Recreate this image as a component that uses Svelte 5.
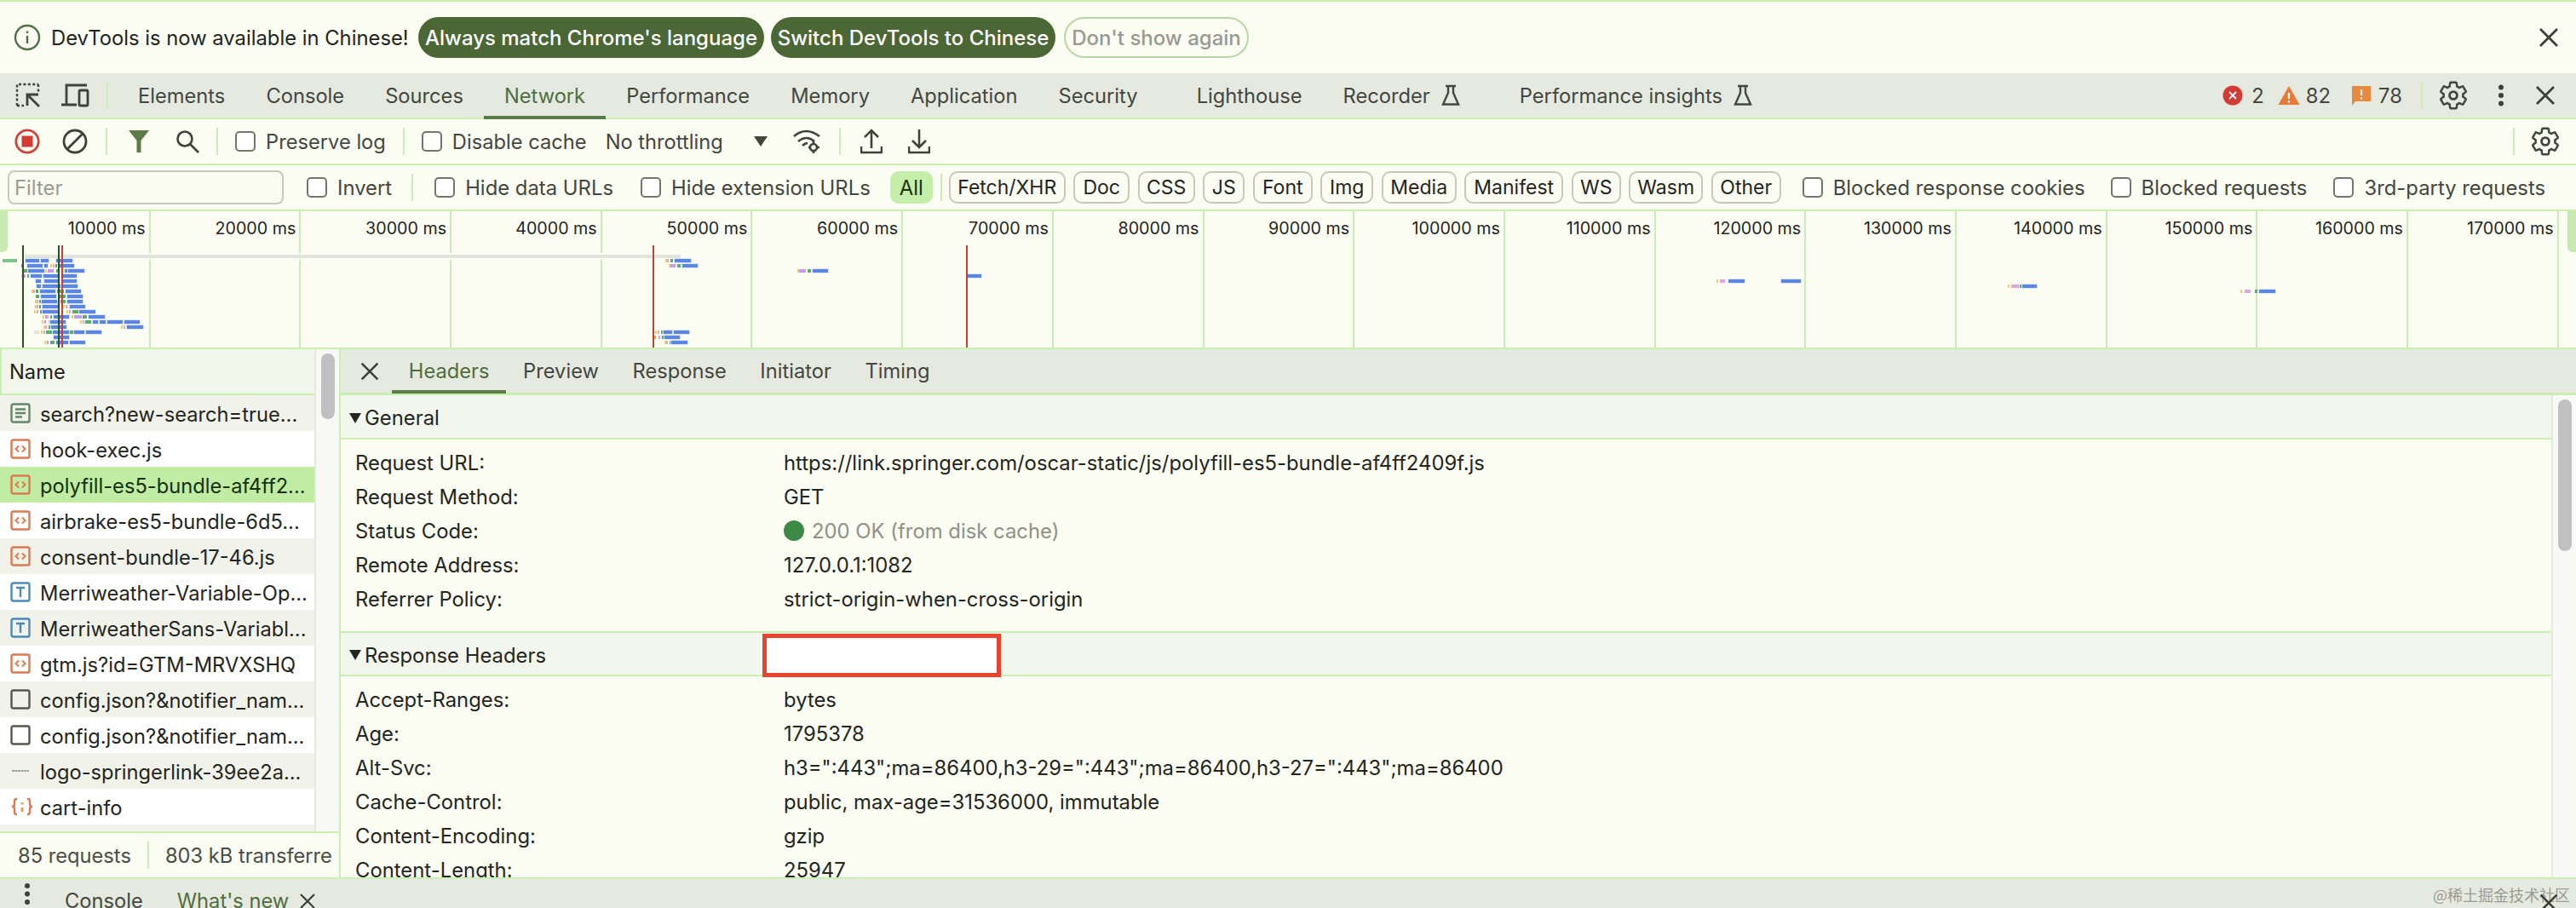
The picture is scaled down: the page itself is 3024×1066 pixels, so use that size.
<script>
  const tabs = [
    { t: 'Elements' }, { t: 'Console' }, { t: 'Sources' }, { t: 'Network', on: true }, { t: 'Performance' },
    { t: 'Memory' }, { t: 'Application' }, { t: 'Security', wide: true }, { t: 'Lighthouse' },
    { t: 'Recorder', flask: true, wide: true }, { t: 'Performance insights', flask: true }
  ];
  const pills = [['Fetch/XHR', 137], ['Doc', 66], ['CSS', 67], ['JS', 49], ['Font', 70], ['Img', 62], ['Media', 88], ['Manifest', 116], ['WS', 58], ['Wasm', 87], ['Other', 82]];
  const ticks = Array.from({ length: 17 }, (_, i) => `${(i + 1) * 10000} ms`);
  const files = [
    ['doc', 'search?new-search=true...', 'alt'], ['js', 'hook-exec.js', ''], ['js', 'polyfill-es5-bundle-af4ff2...', 'sel'],
    ['js', 'airbrake-es5-bundle-6d5...', ''], ['js', 'consent-bundle-17-46.js', 'alt'], ['font', 'Merriweather-Variable-Op...', ''],
    ['font', 'MerriweatherSans-Variabl...', 'alt'], ['js', 'gtm.js?id=GTM-MRVXSHQ', ''], ['box', 'config.json?&notifier_nam...', 'alt'],
    ['box', 'config.json?&notifier_nam...', ''], ['logo', 'logo-springerlink-39ee2a...', 'alt'], ['json', 'cart-info', ''], ['', '', 'alt']
  ];
  const general = [
    ['Request URL:', 'https://link.springer.com/oscar-static/js/polyfill-es5-bundle-af4ff2409f.js'],
    ['Request Method:', 'GET'], ['Status Code:', '200 OK (from disk cache)', true], ['Remote Address:', '127.0.0.1:1082'],
    ['Referrer Policy:', 'strict-origin-when-cross-origin']
  ];
  const response = [
    ['Accept-Ranges:', 'bytes'], ['Age:', '1795378'], ['Alt-Svc:', 'h3=":443";ma=86400,h3-29=":443";ma=86400,h3-27=":443";ma=86400'],
    ['Cache-Control:', 'public, max-age=31536000, immutable'], ['Content-Encoding:', 'gzip'], ['Content-Length:', '25947']
  ];

  const C = { b: '#5d86e0', g: '#5cac6c', p: '#c79af0', y: '#efd067', k: '#e3a4e4', o: '#e9a54a', a: '#e2e4db' };
  const spec = [
    [1, 'b90-138 b143-172 b198-254'], [2, 'g75-85 b95-150 b155-168 y178-181 k187-190 g196-200 b208-260'],
    [3, 'g85-95 b100-155 y160-164 p168-190 g197-205 y218-221 b228-236 b240-296'],
    [4, 'y76-79 p82-90 g96-102 b107-148 b153-205 b215-270'], [5, 'b125-145 b155-207 b217-270'], [6, 'b130-145 b150-212 b220-274'],
    [7, 'y110-113 k118-121 g127-135 b140-195 g202-225 b232-286'], [8, 'g127-138 b143-198 g210-230 b236-290'],
    [9, 'y122-125 k130-133 g139-143 b147-202 g212-232 b238-292'], [10, 'y122-125 k130-133 g139-143 b149-204 y222-225 k230-233 b246-300'],
    [11, 'y120-123 k128-131 g140-146 b150-205 y235-238 k243-246 g255-275 b280-335'],
    [12, 'y150-153 p158-161 k166-169 g178-182 b188-243 y252-255 p260-287 g292-306 b312-368'],
    [13, 'y147-150 p157-160 k170-173 b178-232 y282-285 k290-293 g300-303 g306-320 b326-346 b350-373 b378-433 b437-492'],
    [14, 'y152-155 k160-163 g172-176 b180-235 y425-428 k435-438 b448-504'],
    [15, 'a120-137 y145-148 k153-156 g162-182 b186-242 g247-257 b262-298 b303-358'], [16, 'b189-244'],
    [17, 'y155-158 p165-168 g177-192 b197-241 b246-300']
  ];
  const spec2 = [
    [1, 'y122-125 k130-133 g140-151 b156-212'], [2, 'y135-138 p142-159 g165-177 b182-237'],
    [3, 'y587-590 p594-618 g624-636 b642-696'], [4, 'b1188-1236'],
    [5, 'y3825-3830 k3838-3855 b3867-3924 b4053-4122'], [6, 'y4851-4856 k4862-4890 g4892-4899 b4902-4953'], [7, 'y5670-5675 k5685-5705 g5720-5730 b5736-5793'],
    [15, 'y87-90 k95-98 g108-112 b118-147 b153-207'], [16, 'o85-88 k98-101 g110-114 b120-175'], [17, 'y120-123 k127-130 g138-142 b145-200']
  ];
  function parse(list, ox) {
    const out = [];
    for (const [row, s] of list) {
      for (const seg of s.split(' ')) {
        const [a, b] = seg.slice(1).split('-').map(Number);
        out.push({ x: ox + a / 3, w: (b - a) / 3, y: 56 + (row - 1) * 6, c: C[seg[0]], blue: seg[0] === 'b' });
      }
    }
    return out;
  }
  const bars = [...parse(spec, 0), ...parse(spec2, 740)];
  const gear = 'M19.14 12.94c.04-.3.06-.61.06-.94 0-.32-.02-.64-.07-.94l2.03-1.58c.18-.14.23-.41.12-.61l-1.92-3.32c-.12-.22-.37-.29-.59-.22l-2.39.96c-.5-.38-1.03-.7-1.62-.94l-.36-2.54c-.04-.24-.24-.41-.48-.41h-3.84c-.24 0-.43.17-.47.41l-.36 2.54c-.59.24-1.13.57-1.62.94l-2.39-.96c-.22-.08-.47 0-.59.22L2.74 8.87c-.12.21-.08.47.12.61l2.03 1.58c-.05.3-.09.63-.09.94s.02.64.07.94l-2.03 1.58c-.18.14-.23.41-.12.61l1.92 3.32c.12.22.37.29.59.22l2.39-.96c.5.38 1.03.7 1.62.94l.36 2.54c.05.24.24.41.48.41h3.84c.24 0 .44-.17.47-.41l.36-2.54c.59-.24 1.13-.56 1.62-.94l2.39.96c.22.08.47 0 .59-.22l1.92-3.32c.12-.22.07-.47-.12-.61l-2.01-1.58z';
</script>

{#snippet x(size)}
  <svg class="ic" width={size} height={size} viewBox="0 0 24 24"><path d="M4 4 20 20M20 4 4 20" stroke="#3c3f38" stroke-width="2.2" fill="none"/></svg>
{/snippet}
{#snippet cog()}
  <svg class="ic" width="38" height="38" viewBox="0 0 24 24" fill="none" stroke="#44473f" stroke-width="1.6"><path d={gear}/><circle cx="12" cy="12" r="2.8" stroke-width="1.8"/></svg>
{/snippet}
{#snippet flask()}
  <svg class="ic flask" width="24" height="26" viewBox="0 0 24 26" fill="none" stroke="#44473f" stroke-width="2.4"><path d="M6 2h12M9 2v8L3 23.5h18L15 10V2"/></svg>
{/snippet}
{#snippet checkbox()}<span class="cb"></span>{/snippet}
{#snippet fileIcon(k)}
  {#if k === 'doc'}
    <svg width="24" height="24" viewBox="0 0 24 24" fill="none" stroke="#62886b" stroke-width="2.4"><rect x="1.5" y="1.5" width="21" height="21" rx="2"/><path d="M6 7.5h12M6 12h12M6 16.5h8"/></svg>
  {:else if k === 'js'}
    <svg width="24" height="24" viewBox="0 0 24 24" fill="none" stroke="#dc7a52" stroke-width="2.4"><rect x="1.5" y="1.5" width="21" height="21" rx="2"/><path d="M10 8.5 6.5 12l3.5 3.5M14 8.5l3.5 3.5-3.5 3.5" stroke-width="2"/></svg>
  {:else if k === 'font'}
    <svg width="24" height="24" viewBox="0 0 24 24" fill="none" stroke="#4a8bb8" stroke-width="2.4"><rect x="1.5" y="1.5" width="21" height="21" rx="2"/><path d="M7 7h10M12 7v11"/></svg>
  {:else if k === 'box'}
    <svg width="24" height="24" viewBox="0 0 24 24" fill="none" stroke="#55574f" stroke-width="2.4"><rect x="1.5" y="1.5" width="21" height="21" rx="2"/></svg>
  {:else if k === 'logo'}
    <svg width="24" height="24" viewBox="0 0 24 24"><path d="M2 12h20" stroke="#7d8a80" stroke-width="1.6" stroke-dasharray="3 .6"/></svg>
  {:else if k === 'json'}
    <svg width="28" height="24" viewBox="0 0 28 24" fill="none" stroke="#dc7a52" stroke-width="2.4"><path d="M8 3H7Q5 3 5 6v3q0 3-3 3 3 0 3 3v3q0 3 2 3h1M20 3h1q2 0 2 3v3q0 3 3 3-3 0-3 3v3q0 3-2 3h-1"/><path d="M14 7v2.5M14 13v5" stroke="#e0a050" stroke-width="3"/></svg>
  {/if}
{/snippet}

<div class="app">
  <div class="infobar">
    <svg class="info" width="32" height="32" viewBox="0 0 32 32" fill="none" stroke="#51704a" stroke-width="2.4"><circle cx="16" cy="16" r="14"/><path d="M16 14v9M16 8.5v2.6"/></svg>
    <span class="msg">DevTools is now available in Chinese!</span>
    <button class="solid first">Always match Chrome's language</button>
    <button class="solid">Switch DevTools to Chinese</button>
    <button class="ghost">Don't show again</button>
    <span class="grow"></span>
    <span class="close-info">{@render x(30)}</span>
  </div>

  <div class="tabbar">
    <svg class="tb1" width="30" height="30" viewBox="0 0 30 30" fill="none" stroke="#3f423b" stroke-width="2.4"><path d="M2 27V2h25" stroke-dasharray="3 2.4"/><path d="M27 2v9M2 27h8" stroke-dasharray="3 2.4"/><path d="M14 27V14h13M14 14l14 14" stroke-width="2.8"/></svg>
    <svg class="tb2" width="34" height="30" viewBox="0 0 34 30" fill="none" stroke="#3f423b" stroke-width="2.8"><path d="M0 26h18M6 26V3h24"/><rect x="21" y="9" width="10" height="18" rx="1.5"/></svg>
    <span class="sep s-tab"></span>
    <div class="tabs">
      {#each tabs as tab}
        <span class="tab" class:on={tab.on} class:wide={tab.wide}>{tab.t}{#if tab.flask}{@render flask()}{/if}</span>
      {/each}
    </div>
    <span class="grow"></span>
    <svg width="24" height="24" viewBox="0 0 24 24"><circle cx="12" cy="12" r="11.5" fill="#d23a34"/><path d="M8 8l8 8M16 8l-8 8" stroke="#fff" stroke-width="1.8"/></svg>
    <span class="count c1">2</span>
    <svg class="warn" width="26" height="24" viewBox="0 0 26 24"><path d="M13 1 25.5 23H.5z" fill="#e57a3a"/><path d="M13 9v7M13 18v2.6" stroke="#fff" stroke-width="2.2"/></svg>
    <span class="count c2">82</span>
    <svg class="iss" width="24" height="24" viewBox="0 0 24 24"><path d="M1 1h22v18H5l-4 5z" fill="#e8893f"/><path d="M12 5v7M12 14v2.6" stroke="#fff" stroke-width="2.2"/></svg>
    <span class="count c3">78</span>
    <span class="sep s-count"></span>
    <span class="gear1">{@render cog()}</span>
    <svg class="dots" width="8" height="26" viewBox="0 0 8 26" fill="#3f423b"><circle cx="4" cy="3.5" r="3"/><circle cx="4" cy="13" r="3"/><circle cx="4" cy="22.5" r="3"/></svg>
    <span class="close-tab">{@render x(30)}</span>
  </div>

  <div class="netbar">
    <svg class="n1" width="30" height="30" viewBox="0 0 30 30"><circle cx="15" cy="15" r="13.2" fill="none" stroke="#c9443f" stroke-width="2.8"/><rect x="8.5" y="8.5" width="13" height="13" fill="#d23a34"/></svg>
    <svg class="n2" width="30" height="30" viewBox="0 0 30 30" fill="none" stroke="#3f423b" stroke-width="2.8"><circle cx="15" cy="15" r="13"/><path d="M6 24 24 6"/></svg>
    <span class="sep s-n1"></span>
    <svg class="n3" width="26" height="28" viewBox="0 0 26 28"><path d="M1 1h24l-9.5 12v14h-5V13z" fill="#5b7c47"/></svg>
    <svg class="n4" width="28" height="28" viewBox="0 0 28 28" fill="none" stroke="#3f423b" stroke-width="2.6"><circle cx="11" cy="11" r="8.5"/><path d="M17 17 27 27"/></svg>
    <span class="sep s-n2"></span>
    {@render checkbox()}<label class="lbl">Preserve log</label>
    <span class="sep s-n3"></span>
    {@render checkbox()}<label class="lbl">Disable cache</label>
    <span class="thr">No throttling</span>
    <span class="tri"></span>
    <svg class="wifi" width="34" height="30" viewBox="0 0 34 30" fill="none" stroke="#3f423b" stroke-width="2.6"><path d="M1 9Q15-3 31 9M6 15q10-8 19 0M11 20q3-3 6-3"/><circle cx="24" cy="22" r="4"/><path d="M24 15v3M24 26v3M18 22h2M28 22h3"/></svg>
    <span class="sep s-n4"></span>
    <svg class="up" width="26" height="30" viewBox="0 0 26 30" fill="none" stroke="#3f423b" stroke-width="2.6"><path d="M13 23V2M5 10l8-8 8 8M1 21v7h24v-7"/></svg>
    <svg class="down" width="26" height="30" viewBox="0 0 26 30" fill="none" stroke="#3f423b" stroke-width="2.6"><path d="M13 1v21M5 14l8 8 8-8M1 21v7h24v-7"/></svg>
    <span class="grow"></span>
    <span class="sep s-n5"></span>
    <span class="gear2">{@render cog()}</span>
  </div>

  <div class="filterbar">
    <div class="filter">Filter</div>
    <span class="f-cb1">{@render checkbox()}</span><label class="lbl">Invert</label>
    <span class="sep s-f1"></span>
    {@render checkbox()}<label class="lbl">Hide data URLs</label>
    <span class="f-cb2">{@render checkbox()}</span><label class="lbl">Hide extension URLs</label>
    <span class="all">All</span>
    <span class="sep s-f2"></span>
    <div class="pills">{#each pills as p}<span class="pill" style="width:{p[1]}px">{p[0]}</span>{/each}</div>
    <span class="f-cb3">{@render checkbox()}</span><label class="lbl">Blocked response cookies</label>
    <span class="f-cb4">{@render checkbox()}</span><label class="lbl">Blocked requests</label>
    <span class="f-cb5">{@render checkbox()}</span><label class="lbl">3rd-party requests</label>
  </div>

  <div class="overview">
    <div class="ticks">{#each ticks as t}<div class="tick">{t}</div>{/each}</div>
    <div class="handle left"></div>
    <div class="handle right"></div>
    <div class="band"></div>
    <div class="graybar"></div>
    <div class="greenbar"></div>
    {#each bars as b}
      <i class="bar" class:blue={b.blue} style="left:{b.x}px;top:{b.y}px;width:{b.w}px;background:{b.c}"></i>
    {/each}
    <i class="vl dark" style="left:26px"></i>
    <i class="vl dark" style="left:68px"></i>
    <i class="vl red" style="left:72px"></i>
    <i class="vl red" style="left:766px"></i>
    <i class="vl red" style="left:1134px"></i>
  </div>

  <div class="split">
    <div class="left-pane">
      <div class="list-wrap">
        <div class="list">
          <div class="name-head">Name</div>
          {#each files as f}
            <div class="row {f[2]}">
              <span class="ficon">{@render fileIcon(f[0])}</span><span class="fname">{f[1]}</span>
            </div>
          {/each}
        </div>
        <div class="track"><div class="thumb t1"></div></div>
      </div>
      <div class="status"><span>85 requests</span><span class="sep s-st"></span><span>803 kB transferre</span></div>
    </div>

    <div class="right-pane">
      <div class="detail-tabs">
        <span class="detail-x">{@render x(28)}</span>
        <span class="dtab on">Headers</span><span class="dtab">Preview</span><span class="dtab">Response</span><span class="dtab">Initiator</span><span class="dtab">Timing</span>
      </div>
      <div class="detail-body">
        <div class="content">
          <div class="section"><span class="caret"></span>General</div>
          <div class="kvs gen">
            {#each general as g}
              <div class="kv"><span class="k">{g[0]}</span>{#if g[2]}<span class="v muted"><i class="dot"></i>{g[1]}</span>{:else}<span class="v">{g[1]}</span>{/if}</div>
            {/each}
          </div>
          <div class="section resp"><span class="caret"></span>Response Headers<span class="redact"></span></div>
          <div class="kvs">
            {#each response as g}<div class="kv"><span class="k">{g[0]}</span><span class="v">{g[1]}</span></div>{/each}
          </div>
        </div>
        <div class="track"><div class="thumb t2"></div></div>
      </div>
    </div>
  </div>

  <div class="drawer">
    <svg class="d-dots" width="8" height="34" viewBox="0 0 8 34" fill="#3f423b"><circle cx="4" cy="8" r="3"/><circle cx="4" cy="17.5" r="3"/><circle cx="4" cy="27" r="3"/></svg>
    <span class="d-tab">Console</span>
    <span class="d-tab green">What's new</span>
    <span class="d-x">{@render x(24)}</span>
    <span class="grow"></span>
    <span class="mark">@稀土掘金技术社区</span>
    <span class="d-x2">{@render x(28)}</span>
  </div>
</div>

<style>
  :global(body) { margin: 0; background: #fbfdf2; }
  .app { width: 3024px; height: 1066px; overflow: hidden; display: flex; flex-direction: column; font-family: Inter, "Liberation Sans", sans-serif; font-size: 23.85px; color: #23251f; background: #fbfdf2; }
  .ic { display: block; }
  .grow { flex: 1; }
  .sep { width: 2px; height: 32px; background: #cdeab9; flex: none; }

  .infobar { height: 84px; flex: none; border-top: 2px solid #c9f0b2; display: flex; align-items: center; }
  .info { margin-left: 16px; flex: none; }
  .msg { margin-left: 12px; width: 418px; white-space: nowrap; flex: none; font-size: 23.8px; }
  button { font: inherit; height: 48px; border-radius: 24px; padding: 0; white-space: nowrap; flex: none; font-weight: 500; font-size: 24px; }
  .solid { background: #4a6735; color: #fff; border: 0; width: 334px; margin-left: 8px; }
  .solid.first { margin-left: 13px; width: 406px; }
  .ghost { background: transparent; color: #98998f; border: 2.5px solid #b7d7a4; width: 217px; margin-left: 10px; }
  .close-info { margin-right: 17px; }

  .tabbar { height: 52px; flex: none; background: #e6e9df; border-bottom: 2px solid #c9f0b2; display: flex; align-items: center; }
  .tb1 { margin-left: 18px; flex: none; }
  .tb2 { margin-left: 24px; flex: none; }
  .s-tab { margin-left: 19px; }
  .tabs { display: flex; height: 100%; margin-left: 11px; font-size: 23.7px; }
  .tab { display: flex; align-items: center; padding: 0 24px; color: #44473f; position: relative; white-space: nowrap; }
  .tab.wide { padding-right: 45px; }
  .tab.on { color: #4f6e3e; }
  .tab.on::after { content: ''; position: absolute; left: 0; right: 0; bottom: -2px; height: 4px; background: #5b7c47; }
  .flask { margin-left: 12px; }
  .count { color: #44473f; }
  .c1 { margin: 0 16px 0 10px; }
  .warn { margin-right: 7px; }
  .c2 { margin-right: 24px; }
  .iss { margin-right: 8px; }
  .s-count { margin-left: 22px; }
  .gear1 { margin-left: 17px; }
  .dots { margin-left: 33px; }
  .close-tab { margin: 0 21px 0 33px; }

  .netbar { height: 52px; flex: none; border-bottom: 2px solid #c9f0b2; display: flex; align-items: center; font-size: 23.7px; }
  .n1 { margin-left: 17px; flex: none; }
  .n2 { margin-left: 26px; flex: none; }
  .s-n1 { margin-left: 21px; }
  .n3 { margin-left: 24px; flex: none; }
  .n4 { margin-left: 30px; flex: none; }
  .s-n2 { margin-left: 20px; margin-right: 20px; }
  .cb { display: block; width: 24px; height: 24px; box-sizing: border-box; border: 2.5px solid #73756e; border-radius: 5px; background: #fff; flex: none; }
  .lbl { margin-left: 12px; color: #44473f; white-space: nowrap; flex: none; }
  .s-n3 { margin-left: 20px; margin-right: 20px; }
  .thr { margin-left: 22px; color: #44473f; white-space: nowrap; }
  .tri { width: 0; height: 0; margin-left: 36px; border-left: 8px solid transparent; border-right: 8px solid transparent; border-top: 12px solid #44473f; }
  .wifi { margin-left: 30px; flex: none; }
  .s-n4 { margin-left: 20px; }
  .up { margin-left: 23px; flex: none; }
  .down { margin-left: 30px; flex: none; }
  .s-n5 { margin-right: 17px; }
  .gear2 { margin-right: 17px; }

  .filterbar { height: 52px; flex: none; border-bottom: 2px solid #c9f0b2; display: flex; align-items: center; }
  .filter { margin-left: 9px; width: 324px; height: 40px; box-sizing: border-box; border: 2.5px solid #c6c9bc; border-radius: 8px; background: #fbfcf1; color: #9b9c94; line-height: 38px; padding-left: 6px; flex: none; }
  .f-cb1 { margin-left: 27px; }
  .s-f1 { margin: 0 25px 0 23px; }
  .f-cb2 { margin-left: 32px; }
  .all { margin-left: 23px; width: 50px; height: 38px; border-radius: 10px; background: #c4eeaa; color: #1f3311; display: flex; align-items: center; justify-content: center; flex: none; }
  .s-f2 { margin-left: 9px; }
  .pills { display: flex; gap: 9.5px; margin-left: 8px; }
  .pill { height: 38px; box-sizing: border-box; border: 2.5px solid #c6c9bc; border-radius: 10px; display: flex; align-items: center; justify-content: center; white-space: nowrap; color: #23251f; flex: none; font-size: 23px; }
  .f-cb3 { margin-left: 25px; }
  .f-cb4 { margin-left: 30px; }
  .f-cb5 { margin-left: 31px; }

  .overview { height: 162px; flex: none; position: relative; box-sizing: border-box; border-bottom: 2px solid #c9f0b2; overflow: hidden; }
  .ticks { display: flex; height: 160px; }
  .tick { width: 176.7px; flex: none; box-sizing: border-box; border-right: 2.5px solid #cdeab9; text-align: right; padding: 8px 4px 0 0; font-size: 19.7px; white-space: nowrap; line-height: 24px; color: #23251f; }
  .handle { position: absolute; top: 0; height: 48px; width: 9px; background: #c8e9b2; }
  .handle.left { left: 0; border-radius: 0 0 6px 0; }
  .handle.right { right: 0; width: 10px; border-radius: 0 0 0 6px; }
  .band { position: absolute; left: 30px; top: 49px; width: 770px; height: 8px; background: #fbfdf2; }
  .graybar { position: absolute; left: 29px; top: 51px; width: 770px; height: 4px; background: #e2e4db; }
  .greenbar { position: absolute; left: 3px; top: 56px; width: 17px; height: 4px; background: #7cc68a; }
  .bar { position: absolute; height: 4px; display: block; min-width: 2px; }
  .bar.blue { box-shadow: 0 0 0 1px #d9e6fb; }
  .vl { position: absolute; top: 40px; bottom: 0; width: 2px; display: block; }
  .vl.dark { background: #2f4f22; }
  .vl.red { background: #c4413c; }

  .split { flex: 1; min-height: 0; display: flex; }
  .left-pane { width: 398px; flex: none; display: flex; flex-direction: column; border-right: 2px solid #c9f0b2; font-size: 23.7px; }
  .list-wrap { flex: 1; min-height: 0; display: flex; overflow: hidden; }
  .list { width: 369px; flex: none; overflow: hidden; }
  .name-head { height: 54px; box-sizing: border-box; padding-left: 9px; border-left: 2px solid #c9f0b2; border-bottom: 2px solid #c9f0b2; background: #f3f6ea; display: flex; align-items: center; color: #1f2119; }
  .row { height: 42px; display: flex; align-items: center; background: #fff; white-space: nowrap; overflow: hidden; }
  .row.alt { background: #f1f3ea; }
  .row.sel { background: #c0eca4; color: #15300a; }
  .ficon { width: 48px; padding-left: 12px; box-sizing: border-box; display: flex; flex: none; }
  .ficon svg { display: block; }
  .fname { margin-left: -1px; margin-top: 3px; }
  .track { flex: 1; background: #f8f8f6; border-left: 2px solid #e6e7e2; position: relative; }
  .thumb { position: absolute; width: 16px; background: #c0c0c0; border-radius: 8px; }
  .t1 { left: 6px; top: 5px; height: 77px; }
  .t2 { left: 6px; top: 5px; height: 178px; }
  .status { height: 52px; flex: none; border-top: 2px solid #c9f0b2; display: flex; align-items: center; padding-left: 21px; color: #4a4d46; white-space: nowrap; overflow: hidden; }
  .s-st { margin: 0 19px; }

  .right-pane { flex: 1; min-width: 0; display: flex; flex-direction: column; }
  .detail-tabs { height: 54px; flex: none; box-sizing: border-box; background: #e6e9df; border-bottom: 3px solid #c9f0b2; display: flex; align-items: center; font-size: 23.7px; }
  .detail-x { margin-left: 20px; margin-right: 12px; }
  .dtab { padding: 0 19.8px; color: #44473f; height: 100%; display: flex; align-items: center; position: relative; }
  .dtab.on { color: #4f6e3e; }
  .dtab.on::after { content: ''; position: absolute; left: 0; right: 0; bottom: -1px; height: 4px; background: #5b7c47; }
  .detail-body { flex: 1; min-height: 0; display: flex; }
  .content { width: 2595px; flex: none; overflow: hidden; }
  .section { height: 52px; box-sizing: border-box; background: #f3f6ec; border-bottom: 2px solid #c9f0b2; display: flex; align-items: center; padding: 3px 0 0 10px; position: relative; color: #23251f; }
  .section.resp { border-top: 2px solid #c9f0b2; height: 53px; }
  .caret { width: 0; height: 0; border-left: 7.5px solid transparent; border-right: 7.5px solid transparent; border-top: 12px solid #23251f; margin-right: 4px; }
  .redact { position: absolute; left: 495px; top: 1px; width: 280px; height: 51px; box-sizing: border-box; background: #fff; border: 5px solid #e8432e; }
  .kvs { padding: 7px 0 0 17px; }
  .kvs.gen { height: 225px; box-sizing: border-box; }
  .kv { height: 40px; display: flex; align-items: center; white-space: nowrap; }
  .k { width: 503px; flex: none; }
  .v.muted { color: #8f9088; display: flex; align-items: center; }
  .dot { width: 24px; height: 24px; border-radius: 50%; background: #3d8a47; margin-right: 9px; display: block; }

  .drawer { height: 34px; flex: none; background: #e6e9df; border-top: 2px solid #c9f0b2; display: flex; align-items: flex-start; position: relative; font-size: 23.7px; }
  .d-dots { margin-left: 28px; flex: none; }
  .d-tab { margin-left: 40px; margin-top: 11px; color: #44473f; line-height: 30px; }
  .d-tab.green { color: #4f6e3e; }
  .d-x { margin-left: 10px; margin-top: 14px; }
  .mark { font-family: "Noto Sans CJK SC", sans-serif; font-size: 18px; color: #9a9b93; line-height: 26px; margin: 5px 7px 0 0; }
  .d-x2 { position: absolute; left: 2978px; top: 14px; }
</style>
